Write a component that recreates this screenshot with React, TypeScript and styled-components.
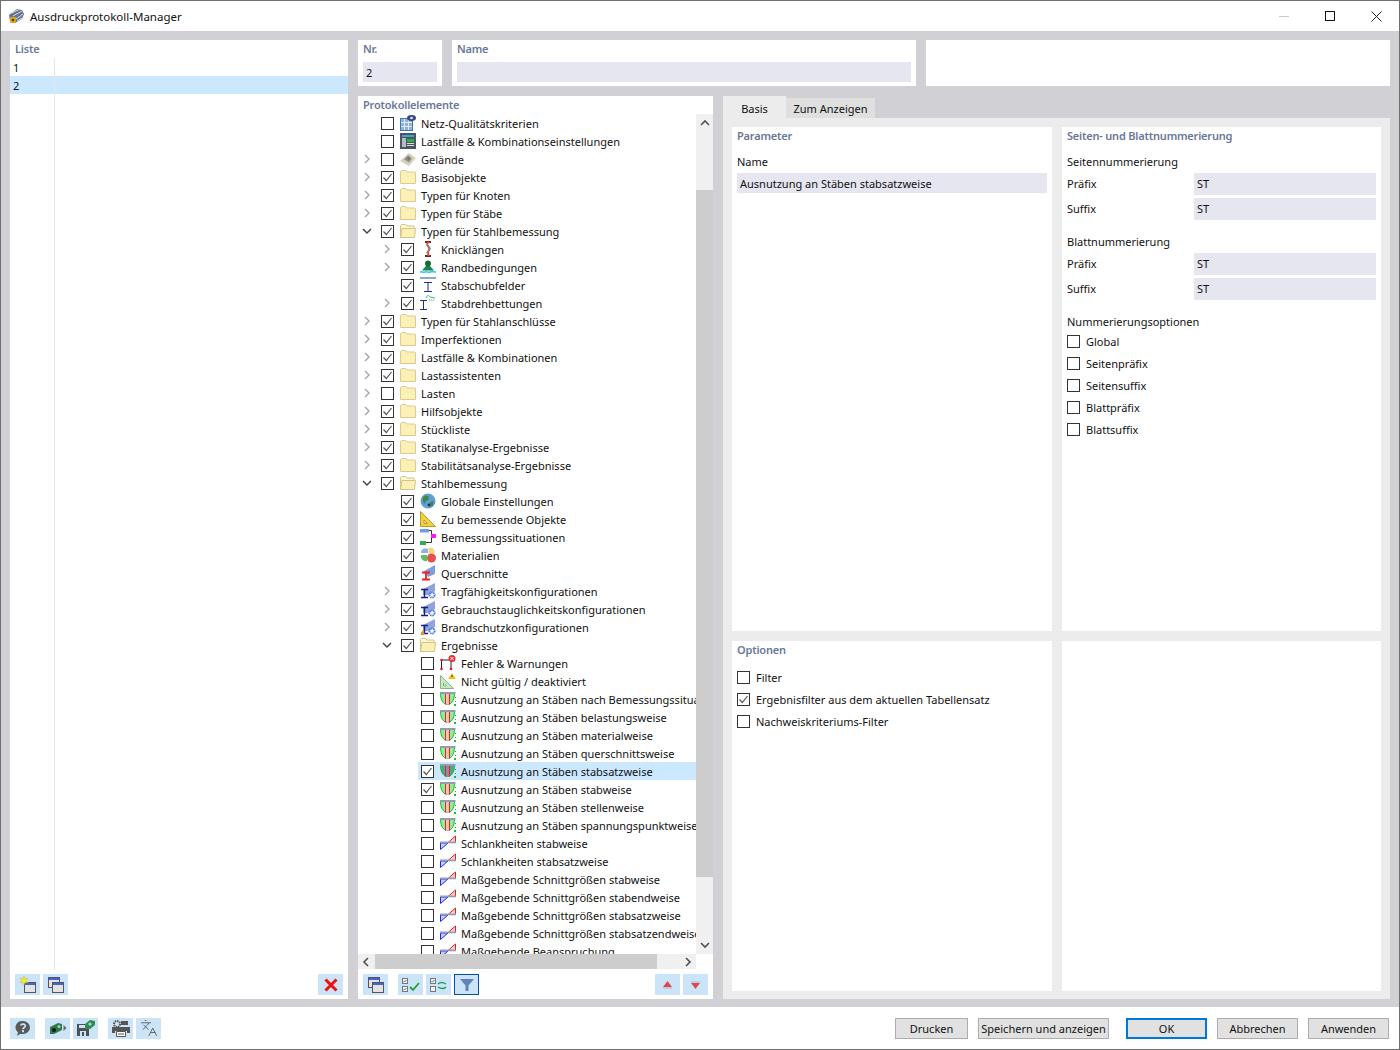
import styled, { createGlobalStyle } from "styled-components";
import { Languages } from "lucide-react";

type IconName =
  | "mesh" | "loadcase" | "terrain" | "folder" | "folderOpen" | "knick" | "rand" | "schub" | "dreh"
  | "globe" | "triangle" | "situation" | "materials" | "section" | "config" | "fire" | "error" | "invalid"
  | "ratio" | "ratioSel" | "slender";

interface IRow {
  label: string;
  level: number;
  expander?: "open" | "closed";
  checked?: boolean;
  icon: IconName;
  selected?: boolean;
}

const rows: IRow[] = [
  { label: "Netz-Qualitätskriterien", level: 0, icon: "mesh" },
  { label: "Lastfälle & Kombinationseinstellungen", level: 0, icon: "loadcase" },
  { label: "Gelände", level: 0, expander: "closed", icon: "terrain" },
  { label: "Basisobjekte", level: 0, expander: "closed", checked: true, icon: "folder" },
  { label: "Typen für Knoten", level: 0, expander: "closed", checked: true, icon: "folder" },
  { label: "Typen für Stäbe", level: 0, expander: "closed", checked: true, icon: "folder" },
  { label: "Typen für Stahlbemessung", level: 0, expander: "open", checked: true, icon: "folderOpen" },
  { label: "Knicklängen", level: 1, expander: "closed", checked: true, icon: "knick" },
  { label: "Randbedingungen", level: 1, expander: "closed", checked: true, icon: "rand" },
  { label: "Stabschubfelder", level: 1, checked: true, icon: "schub" },
  { label: "Stabdrehbettungen", level: 1, expander: "closed", checked: true, icon: "dreh" },
  { label: "Typen für Stahlanschlüsse", level: 0, expander: "closed", checked: true, icon: "folder" },
  { label: "Imperfektionen", level: 0, expander: "closed", checked: true, icon: "folder" },
  { label: "Lastfälle & Kombinationen", level: 0, expander: "closed", checked: true, icon: "folder" },
  { label: "Lastassistenten", level: 0, expander: "closed", checked: true, icon: "folder" },
  { label: "Lasten", level: 0, expander: "closed", icon: "folder" },
  { label: "Hilfsobjekte", level: 0, expander: "closed", checked: true, icon: "folder" },
  { label: "Stückliste", level: 0, expander: "closed", checked: true, icon: "folder" },
  { label: "Statikanalyse-Ergebnisse", level: 0, expander: "closed", checked: true, icon: "folder" },
  { label: "Stabilitätsanalyse-Ergebnisse", level: 0, expander: "closed", checked: true, icon: "folder" },
  { label: "Stahlbemessung", level: 0, expander: "open", checked: true, icon: "folderOpen" },
  { label: "Globale Einstellungen", level: 1, checked: true, icon: "globe" },
  { label: "Zu bemessende Objekte", level: 1, checked: true, icon: "triangle" },
  { label: "Bemessungssituationen", level: 1, checked: true, icon: "situation" },
  { label: "Materialien", level: 1, checked: true, icon: "materials" },
  { label: "Querschnitte", level: 1, checked: true, icon: "section" },
  { label: "Tragfähigkeitskonfigurationen", level: 1, expander: "closed", checked: true, icon: "config" },
  { label: "Gebrauchstauglichkeitskonfigurationen", level: 1, expander: "closed", checked: true, icon: "config" },
  { label: "Brandschutzkonfigurationen", level: 1, expander: "closed", checked: true, icon: "fire" },
  { label: "Ergebnisse", level: 1, expander: "open", checked: true, icon: "folderOpen" },
  { label: "Fehler & Warnungen", level: 2, icon: "error" },
  { label: "Nicht gültig / deaktiviert", level: 2, icon: "invalid" },
  { label: "Ausnutzung an Stäben nach Bemessungssituation", level: 2, icon: "ratio" },
  { label: "Ausnutzung an Stäben belastungsweise", level: 2, icon: "ratio" },
  { label: "Ausnutzung an Stäben materialweise", level: 2, icon: "ratio" },
  { label: "Ausnutzung an Stäben querschnittsweise", level: 2, icon: "ratio" },
  { label: "Ausnutzung an Stäben stabsatzweise", level: 2, checked: true, selected: true, icon: "ratioSel" },
  { label: "Ausnutzung an Stäben stabweise", level: 2, checked: true, icon: "ratio" },
  { label: "Ausnutzung an Stäben stellenweise", level: 2, icon: "ratio" },
  { label: "Ausnutzung an Stäben spannungspunktweise", level: 2, icon: "ratio" },
  { label: "Schlankheiten stabweise", level: 2, icon: "slender" },
  { label: "Schlankheiten stabsatzweise", level: 2, icon: "slender" },
  { label: "Maßgebende Schnittgrößen stabweise", level: 2, icon: "slender" },
  { label: "Maßgebende Schnittgrößen stabendweise", level: 2, icon: "slender" },
  { label: "Maßgebende Schnittgrößen stabsatzweise", level: 2, icon: "slender" },
  { label: "Maßgebende Schnittgrößen stabsatzendweise", level: 2, icon: "slender" },
  { label: "Maßgebende Beanspruchung", level: 2, icon: "slender" },
];

function TreeIcon({ name }: { name: IconName }) {
  switch (name) {
    case "mesh":
      return (
        <svg width="16" height="16" viewBox="0 0 16 16">
          <rect x="0.5" y="3.5" width="12" height="12" fill="#8fb4dc" stroke="#4a77a8" />
          <path d="M4.500 4v11M8.500 4v11M1 7.500h11M1 11.500h11" stroke="#dfeafa" fill="none" />
          <ellipse cx="11.500" cy="3" rx="4.500" ry="3" fill="#39497f" />
          <circle cx="11.500" cy="3" r="1.300" fill="#e8ecf8" />
        </svg>
      );
    case "loadcase":
      return (
        <svg width="16" height="16" viewBox="0 0 16 16">
          <rect x="0" y="0" width="16" height="16" fill="#4e555e" />
          <rect x="2" y="2" width="12" height="2" fill="#3aa4d8" />
          <rect x="2" y="5" width="4" height="9" fill="#b6bcc4" />
          <rect x="7" y="6" width="7" height="3" fill="#27b048" />
          <rect x="7" y="10" width="7" height="1" fill="#d8dce2" />
          <rect x="7" y="12" width="7" height="1" fill="#d8dce2" />
        </svg>
      );
    case "terrain":
      return (
        <svg width="16" height="16" viewBox="0 0 16 16">
          <path d="M0 10 9 2l7 5-7 8z" fill="#d2d2bd" />
          <path d="M4 8.500 8 4l4 3.500-3 4z" fill="#92928c" />
          <path d="M7 7l2-1 1 2-2 1z" fill="#6d6d6a" />
        </svg>
      );
    case "folder":
      return (
        <svg width="16" height="16" viewBox="0 0 16 16">
          <path d="M0.500 14.500v-12l1-1h4l1.500 1.500h8l.5.500v11z" fill="#fbf1b7" stroke="#dccb8a" strokeLinejoin="round" />
        </svg>
      );
    case "folderOpen":
      return (
        <svg width="16" height="16" viewBox="0 0 16 16">
          <path d="M0.500 14.500v-12l1-1h4l1.500 1.500h7v2" fill="#fdf7d2" stroke="#d3c386" />
          <path d="M0.500 14.500 2 5.500h13.500l-1 9z" fill="#fbf1b7" stroke="#d3c386" strokeLinejoin="round" />
        </svg>
      );
    case "knick":
      return (
        <svg width="16" height="16" viewBox="0 0 16 16">
          <path d="M5 1h6M5 15h6" stroke="#8a1c1c" strokeWidth="2" />
          <path d="M9 1C4 4 11 6 9 9s-1 3 0 6" stroke="#e0503a" strokeWidth="2" fill="none" />
          <path d="M6 3c5 3 6 5 0 9" stroke="#38a8c0" fill="none" />
        </svg>
      );
    case "rand":
      return (
        <svg width="16" height="16" viewBox="0 0 16 16">
          <path d="M0 13c2-1 3 1 5 0s3 1 5 0 4 0 6 0" stroke="#30c8f0" strokeWidth="1.600" fill="none" />
          <path d="M2 11.500 6 7h4l4 4.500z" fill="#15854a" />
          <circle cx="8" cy="4.500" r="3" fill="#1c6a3a" />
        </svg>
      );
    case "schub":
      return (
        <svg width="16" height="16" viewBox="0 0 16 16">
          <rect x="0" y="0" width="16" height="2" fill="#8fa6d0" />
          <path d="M4 5.500h8M8 5.500v9M4 14.500h8" stroke="#1f2f8f" fill="none" />
        </svg>
      );
    case "dreh":
      return (
        <svg width="16" height="16" viewBox="0 0 16 16">
          <path d="M0 5.500h7M3.500 5.500v9M0 14.500h7" stroke="#1f2f8f" fill="none" />
          <path d="M6 3c1-3 3-3 4-1l5 1" stroke="#35c070" fill="none" />
          <path d="M9 4l1 2M11 4l1 2M13 4l1 2" stroke="#8fd0a8" />
        </svg>
      );
    case "globe":
      return (
        <svg width="16" height="16" viewBox="0 0 16 16">
          <circle cx="8" cy="8" r="7.500" fill="#5f9fd8" />
          <path d="M3 4c3-3 6-1 6 1s-3 2-4 5-3-3-2-6zM10 9l4-1-1 4-3 2z" fill="#3e8a4c" />
          <circle cx="9" cy="12" r="1.400" fill="#333" />
        </svg>
      );
    case "triangle":
      return (
        <svg width="16" height="16" viewBox="0 0 16 16">
          <path d="M0.500 0.500v15h15z" fill="#f6cf3a" stroke="#b89a2c" />
          <path d="M4 9v3.500h3.500z" fill="#fff" stroke="#b89a2c" />
        </svg>
      );
    case "situation":
      return (
        <svg width="16" height="16" viewBox="0 0 16 16">
          <rect x="0" y="0" width="9" height="3.500" fill="#6f9fe0" />
          <rect x="0" y="12" width="6" height="4" fill="#2fb04a" />
          <rect x="11" y="5" width="5" height="4" fill="#f020e8" />
          <path d="M9 1.500h2.500V5M11.500 9v4.500H6" stroke="#333" fill="none" />
        </svg>
      );
    case "materials":
      return (
        <svg width="16" height="16" viewBox="0 0 16 16">
          <path d="M1 6a4.500 4.500 0 0 1 7-4v4z" fill="#8fb0e8" />
          <path d="M8.500 1a4.500 4.500 0 0 1 6 5.500H8.500z" fill="#f2d878" />
          <path d="M1 8h6v6a5 5 0 0 1-6-6z" fill="#5cc05c" />
          <circle cx="11.500" cy="11" r="4.500" fill="#e85050" />
        </svg>
      );
    case "section":
      return (
        <svg width="16" height="16" viewBox="0 0 16 16">
          <path d="M4 6 15 0v9L8 12z" fill="#7f9fdc" />
          <path d="M2 7.500h8M6 7.500v7M2 14.500h8" stroke="#ef2020" strokeWidth="1.800" fill="none" />
        </svg>
      );
    case "config":
    case "fire":
      return (
        <svg width="16" height="16" viewBox="0 0 16 16">
          <path d="M3 6 15 0v8l-6 4H3z" fill="#8fa4de" />
          <path d="M1 6.500h7M4.500 6.500v8M1 14.500h7" stroke="#14227f" strokeWidth="1.400" fill="none" />
          <circle cx="12" cy="12" r="2.600" fill="none" stroke="#4f78d8" strokeWidth="1.900" strokeDasharray="1.500 0.700" />
          {name === "fire" && <path d="M1 16c-1-2 1-3 2-5 1 2 2 3 1 5z" fill="#e89020" />}
        </svg>
      );
    case "error":
      return (
        <svg width="16" height="16" viewBox="0 0 16 16">
          <path d="M1.500 5v9M11 5v9M1.500 5H11" stroke="#222" fill="none" />
          <circle cx="1.500" cy="14" r="1.300" fill="#e02020" />
          <circle cx="11" cy="14" r="1.300" fill="#e02020" />
          <circle cx="1.500" cy="5" r="1.300" fill="#e02020" />
          <circle cx="12" cy="3.500" r="3.500" fill="#e83030" />
          <path d="M10.500 2l3 3M13.500 2l-3 3" stroke="#fff" />
        </svg>
      );
    case "invalid":
      return (
        <svg width="16" height="16" viewBox="0 0 16 16">
          <path d="M0.500 2.500v13h13z" fill="#c5ecc0" stroke="#8db088" />
          <path d="M3.500 10v3h3z" fill="#fff" stroke="#8db088" />
          <path d="M12 0l4 6H8z" fill="#f2c218" />
          <path d="M12 2v2" stroke="#333" />
        </svg>
      );
    case "ratio":
    case "ratioSel":
      return (
        <svg width="16" height="16" viewBox="0 0 16 16">
          <path d="M0.500 2C0.500 10 4 13.500 7.500 13.500S14.500 10 14.500 2z" fill={name === "ratio" ? "#8cf08c" : "#4fa88c"} stroke="#20b040" />
          <rect x="5" y="2" width="5" height="11.500" fill={name === "ratio" ? "#f6c0c0" : "#8f8aa8"} />
          <path d="M5.500 2v11.500M9.500 2v11.500" stroke="#ee2020" />
          <rect x="0" y="1" width="15.500" height="2" fill="#8f9cb4" />
          <path d="M15.500 6v1M15.500 10v1" stroke="#18b030" strokeWidth="1" />
          <rect x="14" y="13" width="2" height="2" fill="#18c030" />
        </svg>
      );
    case "slender":
      return (
        <svg width="16" height="16" viewBox="0 0 16 16">
          <path d="M0.500 8 H8 L0.500 14.500z" fill="#c4d0fa" stroke="#1a28f0" />
          <path d="M8 7.500 15.500 1V7.500z" fill="#fcd0d0" stroke="#f01c1c" />
          <rect x="0" y="6.500" width="16" height="1.800" fill="#939db8" />
        </svg>
      );
  }
}

function WindowGlyph({ x, y }: { x: number; y: number }) {
  return (
    <g transform={`translate(${x} ${y})`}>
      <rect x="0.500" y="0.500" width="11" height="10" fill="#e2e2e2" stroke="#555" />
      <rect x="1" y="1" width="10" height="2" fill="#3f63d8" />
    </g>
  );
}

function ToolIcon({ name }: { name: string }) {
  switch (name) {
    case "new":
      return (
        <svg width="18" height="18" viewBox="0 0 18 18">
          <WindowGlyph x={5} y={6} />
          <path d="M5 0l1 3 3-1-2 3 2 2-3-.5L5 9 4 6.500 1 7l2-2.500L1 2l3 1z" fill="#f5ee20" stroke="#b8b020" strokeWidth="0.400" />
        </svg>
      );
    case "copy":
      return (
        <svg width="18" height="18" viewBox="0 0 18 18">
          <WindowGlyph x={1} y={1} />
          <WindowGlyph x={5} y={6} />
        </svg>
      );
    case "delete":
      return (
        <svg width="14" height="14" viewBox="0 0 14 14">
          <path d="M1.500 1.500l11 11M12.500 1.500l-11 11" stroke="#f01010" strokeWidth="3" />
        </svg>
      );
    case "checkAll":
      return (
        <svg width="18" height="16" viewBox="0 0 18 16">
          <rect x="0.500" y="1.500" width="5" height="5" fill="#e8f2fb" stroke="#777" />
          <rect x="0.500" y="9.500" width="5" height="5" fill="#e8f2fb" stroke="#777" />
          <path d="M1.500 4l1 1 2-2M1.500 12l1 1 2-2" stroke="#555" fill="none" strokeWidth="0.800" />
          <path d="M8 10l3 3 6-7" stroke="#22a030" strokeWidth="1.800" fill="none" />
        </svg>
      );
    case "toggle":
      return (
        <svg width="18" height="16" viewBox="0 0 18 16">
          <rect x="0.500" y="1.500" width="5" height="5" fill="#e8f2fb" stroke="#777" />
          <rect x="0.500" y="9.500" width="5" height="5" fill="#e8f2fb" stroke="#777" />
          <path d="M1.500 4l1 1 2-2" stroke="#555" fill="none" strokeWidth="0.800" />
          <path d="M8 7c2-2 5-2 8 0M16 10c-2 2-5 2-8 0" stroke="#22a060" strokeWidth="1.500" fill="none" />
        </svg>
      );
    case "filter":
      return (
        <svg width="14" height="14" viewBox="0 0 14 14">
          <path d="M0 1h14L8.500 7.500V13h-3V7.500z" fill="#5f84b8" />
        </svg>
      );
    case "up":
      return (
        <svg width="9" height="8" viewBox="0 0 9 8">
          <path d="M4.500 0l4.500 6H0z" fill="#e04848" />
          <rect x="0" y="6.500" width="9" height="1" fill="#a8b8c8" />
        </svg>
      );
    case "down":
      return (
        <svg width="9" height="8" viewBox="0 0 9 8">
          <rect x="0" y="0.500" width="9" height="1" fill="#a8b8c8" />
          <path d="M4.500 8 0 2h9z" fill="#e04848" />
        </svg>
      );
    case "help":
      return (
        <svg width="16" height="16" viewBox="0 0 16 16">
          <path d="M8 1a7 6.500 0 0 1 0 13H5l-3 2 1-3.500A6.500 6.500 0 0 1 8 1z" fill="#5a5a5a" />
          <path d="M5.800 5.500C6 3.500 10.500 3.500 10.300 6c-.1 1.500-2.300 1.500-2.300 3.200" stroke="#cce4f7" strokeWidth="1.700" fill="none" />
          <rect x="7" y="10.200" width="2" height="2" fill="#cce4f7" />
        </svg>
      );
    case "gearArrow":
      return (
        <svg width="18" height="16" viewBox="0 0 18 16">
          <path d="M1 7l8-4 4 1v6l-8 4H1z" fill="#2f7a4a" />
          <circle cx="5" cy="10" r="2" fill="#111" />
          <circle cx="10" cy="6.500" r="1.500" fill="#9fd8b0" />
          <path d="M14.500 5v6l3-3z" fill="#666" />
        </svg>
      );
    case "saveGear":
      return (
        <svg width="18" height="16" viewBox="0 0 18 16">
          <path d="M0 4h12v12H0z" fill="#505050" />
          <rect x="2" y="5" width="7" height="3" fill="#cce4f7" />
          <rect x="3" y="11" width="6" height="5" fill="#cce4f7" />
          <rect x="5" y="12" width="2" height="4" fill="#505050" />
          <path d="M8 4l5-4 5 1v4l-5 4H8z" fill="#2f8a54" />
          <circle cx="13" cy="4" r="1.600" fill="#a8e0bc" />
        </svg>
      );
    case "printSet":
      return (
        <svg width="18" height="17" viewBox="0 0 18 17">
          <circle cx="5" cy="4" r="3" fill="none" stroke="#555" strokeWidth="2" strokeDasharray="1.500 0.800" />
          <path d="M9 1h7v4H9z" fill="#555" />
          <path d="M0 7h18v6h-3v-2H3v2H0z" fill="#555" />
          <path d="M4.500 11.500h9v5h-9z" fill="#fff" stroke="#555" />
          <path d="M6 14h6" stroke="#555" />
        </svg>
      );
    case "translate":
      return <Languages size={18} color="#666" strokeWidth={1.300} />;
    default:
      return null;
  }
}

function Check({ checked }: { checked?: boolean }) {
  return (
    <CheckBox>
      {checked && (
        <svg width="11" height="11" viewBox="0 0 11 11">
          <path d="M1.500 5.500l2.800 3L9.500 2" stroke="#555" strokeWidth="1.200" fill="none" />
        </svg>
      )}
    </CheckBox>
  );
}

function Chevron({ dir }: { dir: "left" | "right" | "up" | "down" }) {
  const d = { left: "M6 1 2 5l4 4", right: "M3 1l4 4-4 4", up: "M1 7l4-4 4 4", down: "M1 3l4 4 4-4" }[dir];
  return (
    <svg width="10" height="10" viewBox="0 0 10 10">
      <path d={d} stroke="#505050" strokeWidth="1.600" fill="none" />
    </svg>
  );
}

function TreeRow({ row }: { row: IRow }) {
  return (
    <Row>
      <Indent $level={row.level} />
      <Expander>
        {row.expander && (
          <svg width="10" height="10" viewBox="0 0 10 10">
            <path
              d={row.expander === "open" ? "M1 3l4 4 4-4" : "M3 1l4 4-4 4"}
              stroke={row.expander === "open" ? "#404040" : "#a6a6a6"}
              strokeWidth="1.400"
              fill="none"
            />
          </svg>
        )}
      </Expander>
      <RowBody $selected={row.selected}>
        <Check checked={row.checked} />
        <IconSlot>
          <TreeIcon name={row.icon} />
        </IconSlot>
        <RowLabel>{row.label}</RowLabel>
      </RowBody>
    </Row>
  );
}

export default function App() {
  return (
    <Page>
      <GlobalStyle />
      <TitleBar>
        <TitleIcon>
          <svg width="16" height="16" viewBox="0 0 16 16">
            <path d="M1 7l8-6 5 1 2 4-2 5-7 4-5-2z" fill="#64748c" />
            <path d="M4 5l8-4M5 8l9-5M8 11l7-5M9 13l5-3" stroke="#d6dde8" fill="none" />
            <rect x="2" y="9" width="6" height="6" rx="1" fill="#dca41c" />
            <circle cx="5" cy="12" r="1.300" fill="#5a4010" />
          </svg>
        </TitleIcon>
        <TitleText>Ausdruckprotokoll-Manager</TitleText>
        <WindowButtons>
          <WindowButton>
            <svg width="10" height="10" viewBox="0 0 10 10">
              <path d="M0 5.500h10" stroke="#c8c8c8" />
            </svg>
          </WindowButton>
          <WindowButton>
            <svg width="10" height="10" viewBox="0 0 10 10">
              <rect x="0.500" y="0.500" width="9" height="9" fill="none" stroke="#111" />
            </svg>
          </WindowButton>
          <WindowButton>
            <svg width="11" height="11" viewBox="0 0 11 11">
              <path d="M0.500 0.500l10 10M10.500 0.500l-10 10" stroke="#222" />
            </svg>
          </WindowButton>
        </WindowButtons>
      </TitleBar>

      <Main>
        <ListPanel>
          <SectionTitle>Liste</SectionTitle>
          <ListBody>
            <ListRow>
              <ListCell>1</ListCell>
            </ListRow>
            <ListRow $selected>
              <ListCell>2</ListCell>
            </ListRow>
            <ListFill />
          </ListBody>
          <ListToolbar>
            <ToolGroup>
              <ToolButton><ToolIcon name="new" /></ToolButton>
              <ToolButton><ToolIcon name="copy" /></ToolButton>
            </ToolGroup>
            <ToolButton><ToolIcon name="delete" /></ToolButton>
          </ListToolbar>
        </ListPanel>

        <Content>
          <TopRow>
            <NrBox>
              <SectionTitle>Nr.</SectionTitle>
              <HeaderInput>2</HeaderInput>
            </NrBox>
            <NameBox>
              <SectionTitle>Name</SectionTitle>
              <HeaderInput />
            </NameBox>
            <NameBox />
          </TopRow>

          <BottomRow>
            <ElementsPanel>
              <SectionTitle>Protokollelemente</SectionTitle>
              <TreeGrid>
                <TreeViewport>
                  {rows.map((row) => (
                    <TreeRow key={row.label} row={row} />
                  ))}
                </TreeViewport>
                <VScroll>
                  <VArrow><Chevron dir="up" /></VArrow>
                  <VTrack>
                    <ScrollThumb />
                  </VTrack>
                  <VArrow><Chevron dir="down" /></VArrow>
                </VScroll>
                <HScroll>
                  <ScrollArrow><Chevron dir="left" /></ScrollArrow>
                  <HTrack>
                    <ScrollThumb />
                  </HTrack>
                  <ScrollArrow><Chevron dir="right" /></ScrollArrow>
                </HScroll>
              </TreeGrid>
              <ElementsToolbar>
                <ToolButton><ToolIcon name="copy" /></ToolButton>
                <ToolGroup>
                  <ToolButton><ToolIcon name="checkAll" /></ToolButton>
                  <ToolButton><ToolIcon name="toggle" /></ToolButton>
                  <ToolButton $active><ToolIcon name="filter" /></ToolButton>
                </ToolGroup>
                <ToolGroupEnd>
                  <ToolButton><ToolIcon name="up" /></ToolButton>
                  <ToolButton><ToolIcon name="down" /></ToolButton>
                </ToolGroupEnd>
              </ElementsToolbar>
            </ElementsPanel>

            <TabArea>
              <TabBar>
                <Tab $active>Basis</Tab>
                <Tab>Zum Anzeigen</Tab>
              </TabBar>
              <TabBody>
                <Card>
                  <SectionTitle>Parameter</SectionTitle>
                  <CardBody>
                    <FieldLabel>Name</FieldLabel>
                    <WideInput>Ausnutzung an Stäben stabsatzweise</WideInput>
                  </CardBody>
                </Card>
                <Card>
                  <SectionTitle>Seiten- und Blattnummerierung</SectionTitle>
                  <CardBody>
                    <FieldLabel>Seitennummerierung</FieldLabel>
                    <FieldRows>
                      <FieldRow><span>Präfix</span><ValueInput>ST</ValueInput></FieldRow>
                      <FieldRow><span>Suffix</span><ValueInput>ST</ValueInput></FieldRow>
                    </FieldRows>
                    <GroupLabel>Blattnummerierung</GroupLabel>
                    <FieldRows>
                      <FieldRow><span>Präfix</span><ValueInput>ST</ValueInput></FieldRow>
                      <FieldRow><span>Suffix</span><ValueInput>ST</ValueInput></FieldRow>
                    </FieldRows>
                    <GroupLabel>Nummerierungsoptionen</GroupLabel>
                    <CheckList>
                      {["Global", "Seitenpräfix", "Seitensuffix", "Blattpräfix", "Blattsuffix"].map((t) => (
                        <CheckRow key={t}><Check />{t}</CheckRow>
                      ))}
                    </CheckList>
                  </CardBody>
                </Card>
                <Card>
                  <SectionTitle>Optionen</SectionTitle>
                  <CardBody>
                    <CheckList>
                      <CheckRow><Check />Filter</CheckRow>
                      <CheckRow><Check checked />Ergebnisfilter aus dem aktuellen Tabellensatz</CheckRow>
                      <CheckRow><Check />Nachweiskriteriums-Filter</CheckRow>
                    </CheckList>
                  </CardBody>
                </Card>
                <Card />
              </TabBody>
            </TabArea>
          </BottomRow>
        </Content>
      </Main>

      <Footer>
        <ToolButton><ToolIcon name="help" /></ToolButton>
        <FooterGroup>
          <ToolButton><ToolIcon name="gearArrow" /></ToolButton>
          <ToolButton><ToolIcon name="saveGear" /></ToolButton>
        </FooterGroup>
        <FooterGroup>
          <ToolButton><ToolIcon name="printSet" /></ToolButton>
          <ToolButton><ToolIcon name="translate" /></ToolButton>
        </FooterGroup>
        <FooterActions>
          <ActionButton $width={73}>Drucken</ActionButton>
          <ActionButton $width={131}>Speichern und anzeigen</ActionButton>
          <ActionButton $width={81} $primary>OK</ActionButton>
          <ActionButton $width={81}>Abbrechen</ActionButton>
          <ActionButton $width={81}>Anwenden</ActionButton>
        </FooterActions>
      </Footer>
    </Page>
  );
}

const GlobalStyle = createGlobalStyle`
  body {
    margin: 0;
    background: #fff;
    font-family: "Noto Sans", "Open Sans", sans-serif;
    font-size: 11px;
    color: #111;
  }
`;

const Page = styled.div`
  width: 1400px;
  height: 1050px;
  box-sizing: border-box;
  border: 1px solid #6f6f6f;
  display: flex;
  flex-direction: column;
  overflow: hidden;
`;

const TitleBar = styled.div`
  height: 30px;
  display: flex;
  align-items: center;
  padding-left: 7px;
  background: #fff;
`;

const TitleIcon = styled.div`
  width: 16px;
  height: 16px;
  margin-right: 6px;
`;

const TitleText = styled.div`
  font-size: 11.5px;
  flex: 1;
`;

const WindowButtons = styled.div`
  display: flex;
`;

const WindowButton = styled.div`
  width: 46px;
  height: 30px;
  display: flex;
  align-items: center;
  justify-content: center;
`;

const Main = styled.div`
  height: 976px;
  box-sizing: border-box;
  padding: 9px 9px 8px;
  background: #d1d0d5;
  display: flex;
  gap: 10px;
`;

const Panel = styled.div`
  background: #fff;
  display: flex;
  flex-direction: column;
`;

const ListPanel = styled(Panel)`
  width: 338px;
`;

const SectionTitle = styled.div`
  height: 18px;
  line-height: 18px;
  padding-left: 5px;
  font-weight: 600;
  letter-spacing: -0.2px;
  color: #6a7799;
  flex: none;
`;

const ListBody = styled.div`
  flex: 1;
  display: flex;
  flex-direction: column;
`;

const ListRow = styled.div<{ $selected?: boolean }>`
  height: 18px;
  line-height: 20px;
  background: ${(p) => (p.$selected ? "#cce8ff" : "transparent")};
`;

const ListCell = styled.div`
  width: 45px;
  height: 18px;
  box-sizing: border-box;
  padding-left: 3px;
  border-right: 1px solid #e6e6e6;
`;

const ListFill = styled.div`
  width: 45px;
  flex: 1;
  box-sizing: border-box;
  border-right: 1px solid #e6e6e6;
`;

const ListToolbar = styled.div`
  height: 29px;
  box-sizing: border-box;
  padding: 4px 5px;
  display: flex;
  justify-content: space-between;
`;

const ToolGroup = styled.div`
  display: flex;
  gap: 3px;
`;

const ToolGroupEnd = styled(ToolGroup)`
  margin-left: auto;
`;

const ToolButton = styled.div<{ $active?: boolean }>`
  width: 25px;
  height: 21px;
  box-sizing: border-box;
  background: #cce4f7;
  border: ${(p) => (p.$active ? "1px solid #005499" : "none")};
  display: flex;
  align-items: center;
  justify-content: center;
  flex: none;
`;

const Content = styled.div`
  flex: 1;
  display: flex;
  flex-direction: column;
  gap: 10px;
  min-width: 0;
`;

const TopRow = styled.div`
  height: 46px;
  display: flex;
  gap: 10px;
`;

const NrBox = styled(Panel)`
  width: 84px;
`;

const NameBox = styled(Panel)`
  width: 464px;
`;

const HeaderInput = styled.div`
  height: 20px;
  line-height: 22px;
  margin: 4px 5px 0 5px;
  padding-left: 3px;
  background: #e6e6f0;
`;

const BottomRow = styled.div`
  flex: 1;
  display: flex;
  gap: 10px;
  min-height: 0;
`;

const ElementsPanel = styled(Panel)`
  width: 355px;
`;

const TreeGrid = styled.div`
  height: 855px;
  display: grid;
  grid-template-columns: 338px 17px;
  grid-template-rows: 840px 15px;
`;

const TreeViewport = styled.div`
  overflow: hidden;
`;

const Row = styled.div`
  height: 18px;
  display: flex;
`;

const Indent = styled.div<{ $level: number }>`
  width: ${(p) => p.$level * 20}px;
  flex: none;
`;

const Expander = styled.div`
  width: 20px;
  flex: none;
  padding-left: 4px;
  box-sizing: border-box;
  display: flex;
  align-items: center;
`;

const RowBody = styled.div<{ $selected?: boolean }>`
  flex: 1;
  min-width: 0;
  display: flex;
  align-items: center;
  padding-left: 3px;
  background: ${(p) => (p.$selected ? "#cce8ff" : "transparent")};
`;

const CheckBox = styled.div`
  width: 13px;
  height: 13px;
  flex: none;
  box-sizing: border-box;
  border: 1px solid #333;
  background: #fff;
  display: flex;
  align-items: center;
  justify-content: center;
`;

const IconSlot = styled.div`
  width: 16px;
  height: 16px;
  margin: 0 5px 0 6px;
  flex: none;
`;

const RowLabel = styled.div`
  white-space: nowrap;
`;

const VScroll = styled.div`
  background: #f0f0f0;
  display: flex;
  flex-direction: column;
`;

const HScroll = styled.div`
  background: #f0f0f0;
  display: flex;
  align-items: stretch;
`;

const ScrollArrow = styled.div`
  flex: none;
  min-width: 17px;
  display: flex;
  align-items: center;
  justify-content: center;
`;

const VArrow = styled(ScrollArrow)`
  min-height: 18px;
`;

const VTrack = styled.div`
  flex: 1;
  display: flex;
  flex-direction: column;
  padding: 58px 0 59px;
  min-height: 0;
`;

const HTrack = styled.div`
  flex: 1;
  display: flex;
  padding-right: 22px;
  min-width: 0;
`;

const ScrollThumb = styled.div`
  flex: 1;
  background: #cdcdcd;
`;

const ElementsToolbar = styled.div`
  flex: 1;
  box-sizing: border-box;
  padding: 5px 5px 0;
  display: flex;
  gap: 10px;
`;

const TabArea = styled.div`
  flex: 1;
  display: flex;
  flex-direction: column;
  min-width: 0;
`;

const TabBar = styled.div`
  height: 22px;
  display: flex;
  align-items: flex-end;
`;

const Tab = styled.div<{ $active?: boolean }>`
  height: ${(p) => (p.$active ? 22 : 20)}px;
  line-height: ${(p) => (p.$active ? 26 : 22)}px;
  text-align: center;
  box-sizing: border-box;
  width: ${(p) => (p.$active ? 63 : 89)}px;
  background: ${(p) => (p.$active ? "#ececec" : "#dfdfdf")};
`;

const TabBody = styled.div`
  flex: 1;
  box-sizing: border-box;
  padding: 9px 9px 8px;
  background: #ececec;
  display: grid;
  grid-template-columns: 320px 319px;
  grid-template-rows: 504px 350px;
  gap: 10px;
`;

const Card = styled(Panel)``;

const CardBody = styled.div`
  padding: 8px 5px 0;
  display: flex;
  flex-direction: column;
`;

const FieldLabel = styled.div`
  height: 18px;
  line-height: 18px;
`;

const GroupLabel = styled(FieldLabel)`
  margin-top: 15px;
`;

const WideInput = styled.div`
  height: 20px;
  line-height: 22px;
  margin-top: 2px;
  padding-left: 3px;
  background: #e6e6f0;
`;

const FieldRows = styled.div`
  display: flex;
  flex-direction: column;
  gap: 5px;
  margin-top: 2px;
`;

const FieldRow = styled.div`
  display: grid;
  grid-template-columns: 127px 1fr;
  height: 20px;
  line-height: 22px;
`;

const ValueInput = styled.div`
  padding-left: 3px;
  background: #e6e6f0;
`;

const CheckList = styled.div`
  margin-top: 1px;
  display: flex;
  flex-direction: column;
  gap: 4px;
`;

const CheckRow = styled.div`
  height: 18px;
  display: flex;
  align-items: center;
  gap: 6px;
`;

const Footer = styled.div`
  flex: 1;
  display: flex;
  align-items: center;
  padding: 0 10px 0 9px;
  gap: 10px;
  background: #fff;
`;

const FooterGroup = styled(ToolGroup)``;

const FooterActions = styled.div`
  margin-left: auto;
  display: flex;
  gap: 10px;
`;

const ActionButton = styled.div<{ $width: number; $primary?: boolean }>`
  width: ${(p) => p.$width}px;
  height: 21px;
  box-sizing: border-box;
  line-height: ${(p) => (p.$primary ? 17 : 19)}px;
  text-align: center;
  background: #e1e1e1;
  border: ${(p) => (p.$primary ? "2px solid #0078d7" : "1px solid #adadad")};
  margin-left: ${(p) => (p.$primary ? 7 : 0)}px;
`;
